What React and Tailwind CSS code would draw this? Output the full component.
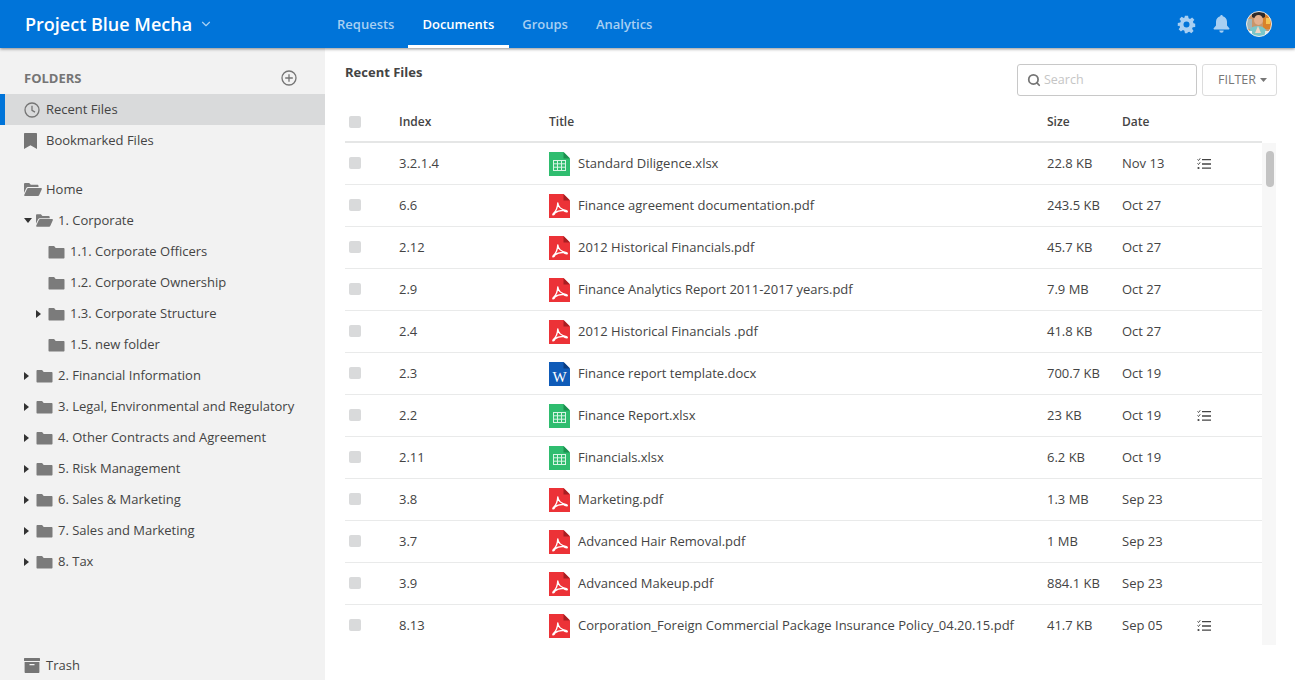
import { Search, ChevronDown } from 'lucide-react'

const font = "font-['Open_Sans',sans-serif]"

const folders = [
  { label: '1. Corporate', level: 0, arrow: 'down', open: true },
  { label: '1.1. Corporate Officers', level: 1 },
  { label: '1.2. Corporate Ownership', level: 1 },
  { label: '1.3. Corporate Structure', level: 1, arrow: 'right' },
  { label: '1.5. new folder', level: 1 },
  { label: '2. Financial Information', level: 0, arrow: 'right' },
  { label: '3. Legal, Environmental and Regulatory', level: 0, arrow: 'right' },
  { label: '4. Other Contracts and Agreement', level: 0, arrow: 'right' },
  { label: '5. Risk Management', level: 0, arrow: 'right' },
  { label: '6. Sales & Marketing', level: 0, arrow: 'right' },
  { label: '7. Sales and Marketing', level: 0, arrow: 'right' },
  { label: '8. Tax', level: 0, arrow: 'right' },
]

const files = [
  { index: '3.2.1.4', type: 'xlsx', title: 'Standard Diligence.xlsx', size: '22.8 KB', date: 'Nov 13', list: true },
  { index: '6.6', type: 'pdf', title: 'Finance agreement documentation.pdf', size: '243.5 KB', date: 'Oct 27' },
  { index: '2.12', type: 'pdf', title: '2012 Historical Financials.pdf', size: '45.7 KB', date: 'Oct 27' },
  { index: '2.9', type: 'pdf', title: 'Finance Analytics Report 2011-2017 years.pdf', size: '7.9 MB', date: 'Oct 27' },
  { index: '2.4', type: 'pdf', title: '2012 Historical Financials .pdf', size: '41.8 KB', date: 'Oct 27' },
  { index: '2.3', type: 'docx', title: 'Finance report template.docx', size: '700.7 KB', date: 'Oct 19' },
  { index: '2.2', type: 'xlsx', title: 'Finance Report.xlsx', size: '23 KB', date: 'Oct 19', list: true },
  { index: '2.11', type: 'xlsx', title: 'Financials.xlsx', size: '6.2 KB', date: 'Oct 19' },
  { index: '3.8', type: 'pdf', title: 'Marketing.pdf', size: '1.3 MB', date: 'Sep 23' },
  { index: '3.7', type: 'pdf', title: 'Advanced Hair Removal.pdf', size: '1 MB', date: 'Sep 23' },
  { index: '3.9', type: 'pdf', title: 'Advanced Makeup.pdf', size: '884.1 KB', date: 'Sep 23' },
  { index: '8.13', type: 'pdf', title: 'Corporation_Foreign Commercial Package Insurance Policy_04.20.15.pdf', size: '41.7 KB', date: 'Sep 05', list: true },
]

const FolderClosed = () => (
  <svg width="17" height="14" viewBox="0 0 17 14" className="shrink-0">
    <path d="M1.500 1h4.600l1.600 2h7.800c.6 0 1 .4 1 1v8.500c0 .6-.4 1-1 1h-14c-.6 0-1-.4-1-1V2c0-.6.4-1 1-1z" fill="#7b7b7b" />
  </svg>
)

const FolderOpen = ({ w = 18 }) => (
  <svg width={w} height="13" viewBox="0 0 18 13" className="shrink-0">
    <path d="M0 1.200C0 .5.500 0 1.200 0h4l1.600 1.800h6.500c.7 0 1.200.5 1.200 1.200v1H4.200c-.9 0-1.600.5-2 1.300L0 10z" fill="#7b7b7b" />
    <path d="M4.400 5h12.700c.6 0 1 .6.700 1.200l-2.600 5.800c-.2.600-.7 1-1.300 1H.9c-.6 0-.9-.5-.7-1l2.800-6c.3-.6.800-1 1.400-1z" fill="#7b7b7b" />
  </svg>
)

const Caret = ({ dir }) =>
  dir === 'down' ? (
    <svg width="8" height="5" viewBox="0 0 8 5" className="shrink-0"><path d="M0 0h8L4 5z" fill="#333" /></svg>
  ) : (
    <svg width="5" height="8" viewBox="0 0 5 8" className="shrink-0"><path d="M0 0l5 4-5 4z" fill="#333" /></svg>
  )

const FileIcon = ({ type }) => {
  const colors = {
    xlsx: ['#2fbd6f', '#1c8f4f'],
    pdf: ['#ec3237', '#a81e22'],
    docx: ['#0f5bb8', '#0a3c80'],
  }
  const [main, fold] = colors[type]
  return (
    <svg width="21" height="24" viewBox="0 0 21 24" className="shrink-0">
      <path d="M0 0h14.500L21 6.500V24H0z" fill={main} />
      <path d="M14.500 0L21 6.500h-6.500z" fill={fold} />
      {type === 'xlsx' && (
        <g fill="none" stroke="#d8f5e4" strokeWidth="1">
          <rect x="4.500" y="8.500" width="12" height="10" />
          <path d="M8.500 8.500v10M12.500 8.500v10M4.500 11.800h12M4.500 15.200h12" />
        </g>
      )}
      {type === 'pdf' && (
        <path
          d="M8.800 9c.2 3.500 3 6.400 8.700 7.600-4-.5-9 .2-13 3 2.500-2.500 4.100-6.400 4.300-10.600zM4.500 19.600c-.7.600-.8 1.300-.3 1.300.6 0 1.500-1 2.200-2.400M17.500 16.600c1 .2 1 1.200.2 1.200-.9 0-2.500-.7-4-2"
          fill="none"
          stroke="#fff"
          strokeWidth="1.400"
          strokeLinejoin="round"
        />
      )}
      {type === 'docx' && (
        <text x="10.500" y="20" textAnchor="middle" fontSize="15" fontFamily="'Liberation Serif', serif" fill="#fff">W</text>
      )}
    </svg>
  )
}

const ChecklistIcon = () => (
  <svg width="14" height="12" viewBox="0 0 14 12" className="shrink-0">
    <path d="M.5 1.500l1 1L3.200.3M.5 5.500l1 1 1.700-2.200" fill="none" stroke="#444" strokeWidth="1" />
    <circle cx="1.500" cy="10" r="1.100" fill="#444" />
    <path d="M5 1.700h9M5 6h9M5 10.200h9" stroke="#444" strokeWidth="1.300" />
  </svg>
)

const Avatar = () => (
  <svg width="26" height="26" viewBox="0 0 26 26" className="shrink-0">
    <defs>
      <clipPath id="avatar-clip"><circle cx="13" cy="13" r="12.500" /></clipPath>
    </defs>
    <g clipPath="url(#avatar-clip)">
      <rect width="26" height="26" fill="#c9956a" />
      <rect x="17" y="4" width="9" height="14" fill="#d9822b" />
      <rect x="20" y="7" width="4" height="6" fill="#f6c453" />
      <rect x="0" y="8" width="6" height="10" fill="#9fb7bb" />
      <path d="M6 1h13v5l-2 1H8L6 6z" fill="#2d2a2b" />
      <ellipse cx="12.500" cy="9" rx="4.500" ry="5" fill="#e3b08f" />
      <path d="M2 26c0-8 4-11 10-11s10 4 10 11z" fill="#7cc7c9" />
      <path d="M9 22l3-7 3 7z" fill="#f0d7c4" />
      <rect x="0" y="20" width="6" height="6" fill="#f4f4f4" />
      <rect x="19" y="20" width="7" height="6" fill="#e5e5e5" />
    </g>
    <circle cx="13" cy="13" r="12.500" fill="none" stroke="#fff" strokeOpacity="0.8" strokeWidth="1" />
  </svg>
)

const Checkbox = () => <div className="w-[12px] h-[12px] rounded-[2px] bg-[#d9dadb]" />

const Header = () => (
  <header className="h-12 shrink-0 bg-[#0074d9] flex items-center relative z-10 shadow-[0_1px_3px_rgba(0,0,0,0.45)]">
    <div className="w-[323px] shrink-0 pl-[25px] flex items-center">
      <span className="text-[18px] font-semibold text-white leading-none">Project Blue Mecha</span>
      <ChevronDown size={14} strokeWidth={2} className="ml-[7px] text-[#a8d0f2]" />
    </div>
    <nav className="flex h-full text-[13px] font-semibold">
      <a className="pl-[14px] pr-[14px] pt-[2px] flex items-center text-[#a8cff2]">Requests</a>
      <a className="pl-[14px] pr-[15px] flex items-center text-white border-b-[3px] border-white pt-[5px]">Documents</a>
      <a className="pl-[13px] pr-[14px] pt-[2px] flex items-center text-[#a8cff2]">Groups</a>
      <a className="px-[14px] pt-[2px] flex items-center text-[#a8cff2]">Analytics</a>
    </nav>
    <div className="ml-auto flex items-center pr-[23px]">
      <svg width="19" height="19" viewBox="0 0 24 24" className="mr-[17px]">
        <path
          fillRule="evenodd"
          fill="#a8cff2"
          d="M10 1h4l.6 3.100 1.900.8 2.600-1.800 2.800 2.800-1.800 2.600.8 1.900L23 11v4l-3.100.6-.8 1.900 1.800 2.600-2.800 2.800-2.600-1.800-1.900.8L13 23h-3l-.6-3.100-1.900-.8-2.600 1.800-2.800-2.800 1.800-2.600-.8-1.900L1 14v-4l3.100-.6.800-1.900L3.100 4.900l2.800-2.800 2.600 1.800 1-.8zM12 8.200a3.800 3.800 0 100 7.600 3.800 3.800 0 000-7.600z"
        />
      </svg>
      <svg width="17" height="18" viewBox="0 0 17 18" className="mr-[16px]">
        <path d="M8.500 0c.8 0 1.300.6 1.300 1.300C12.300 2 14 4.100 14 6.800v3.700l2.300 2.800c.4.500.1 1.200-.6 1.200H1.300c-.7 0-1-.7-.6-1.200L3 10.500V6.800C3 4.100 4.700 2 7.200 1.300 7.200.6 7.700 0 8.500 0zM6.300 15.500h4.400a2.200 2.200 0 01-4.400 0z" fill="#a8cff2" />
      </svg>
      <Avatar />
    </div>
  </header>
)

const Sidebar = () => (
  <aside className="w-[325px] shrink-0 bg-[#f2f2f2] flex flex-col text-[13px] text-[#444]">
    <div className="h-[46px] flex items-center justify-between pl-[24px] pr-[28px] pt-[15px] shrink-0">
      <span className="text-[13px] font-bold text-[#757575]">FOLDERS</span>
      <svg width="16" height="16" viewBox="0 0 16 16" className="-mt-[1px]">
        <circle cx="8" cy="8" r="7" fill="none" stroke="#757575" strokeWidth="1.300" />
        <path d="M8 4.200v7.600M4.200 8h7.600" stroke="#757575" strokeWidth="1.300" />
      </svg>
    </div>
    <div className="h-[31px] flex items-center bg-[#d9dadb] border-l-[5px] border-[#0074d9] pl-[19px] gap-[6px]">
      <svg width="16" height="16" viewBox="0 0 16 16" className="shrink-0">
        <circle cx="8" cy="8" r="7" fill="none" stroke="#757575" strokeWidth="1.300" />
        <path d="M8 3.800V8.300l3 1.800" fill="none" stroke="#757575" strokeWidth="1.300" />
      </svg>
      <span className="pt-[1px]">Recent Files</span>
    </div>
    <div className="h-[31px] flex items-center pl-[24px] gap-[9px]">
      <svg width="13" height="16" viewBox="0 0 13 16" className="shrink-0">
        <path d="M0 1c0-.6.4-1 1-1h11c.6 0 1 .4 1 1v15l-6.500-3.800L0 16z" fill="#757575" />
      </svg>
      <span className="pt-[1px]">Bookmarked Files</span>
    </div>
    <div className="h-[18px] shrink-0" />
    <div className="h-[31px] flex items-center pl-[24px] gap-[4px]">
      <FolderOpen />
      <span>Home</span>
    </div>
    {folders.map((f) => (
      <div key={f.label} className={`h-[31px] flex items-center ${f.level === 1 ? 'pl-[36px]' : 'pl-[24px]'}`}>
        <span className="w-[12px] shrink-0 flex items-center">{f.arrow && <Caret dir={f.arrow} />}</span>
        {f.open ? <FolderOpen w={17} /> : <FolderClosed />}
        <span className="ml-[5px]">{f.label}</span>
      </div>
    ))}
    <div className="mt-auto h-[30px] flex items-center pl-[24px] gap-[6px] shrink-0">
      <svg width="16" height="15" viewBox="0 0 16 15" className="shrink-0">
        <rect width="16" height="3" rx="0.500" fill="#757575" />
        <path d="M.6 4h14.800v10c0 .6-.4 1-1 1H1.600c-.6 0-1-.4-1-1zM5.500 6v1.300h5V6z" fill="#757575" fillRule="evenodd" />
      </svg>
      <span className="pt-[2px]">Trash</span>
    </div>
  </aside>
)

const rowGrid = 'grid grid-cols-[50px_150px_498px_75px_75px_1fr] items-center'

const FileTable = () => (
  <div className="flex pr-[19px]">
    <div className="flex-1 min-w-0 h-[502px] overflow-hidden">
      {files.map((file) => (
        <div key={file.index} className={`${rowGrid} h-[42px] border-b border-[#e9eaea] pl-[4px] text-[#444]`}>
          <div className="-mt-[2px]"><Checkbox /></div>
          <span className="pt-[1px]">{file.index}</span>
          <div className="flex items-center gap-[8px] whitespace-nowrap">
            <FileIcon type={file.type} />
            <span className="pt-[1px]">{file.title}</span>
          </div>
          <span className="pt-[1px]">{file.size}</span>
          <span className="pt-[1px]">{file.date}</span>
          <span>{file.list && <ChecklistIcon />}</span>
        </div>
      ))}
    </div>
    <div className="w-[14px] shrink-0 h-[502px] bg-[#f7f7f7] pl-[4px] pt-[8px]">
      <div className="w-[8px] h-[36px] rounded-[4px] bg-[#c3c3c3]" />
    </div>
  </div>
)

export default function App() {
  return (
    <div className={`${font} w-[1295px] h-[680px] flex flex-col overflow-hidden bg-white`}>
      <Header />
      <div className="flex flex-1 min-h-0">
        <Sidebar />
        <main className="flex-1 min-w-0 flex flex-col pl-[20px] text-[13px]">
          <div className="h-[47px] shrink-0 flex items-start pt-[16px] pr-[18px]">
            <span className="font-bold text-[#444] leading-[17px]">Recent Files</span>
            <div className="ml-auto w-[180px] h-[32px] border border-[#c8c8c8] rounded-[3px] flex items-center pl-[9px] gap-[3px]">
              <Search size={14} strokeWidth={3} className="text-[#757575]" />
              <span className="text-[#c5c5c5] text-[12.500px]">Search</span>
            </div>
            <div className="ml-[5px] w-[75px] h-[32px] border border-[#dcdcdc] rounded-[3px] flex items-center pl-[15px] gap-[4px] text-[12.500px] text-[#777]">
              FILTER
              <svg width="7" height="4" viewBox="0 0 7 4"><path d="M0 0h7L3.500 4z" fill="#777" /></svg>
            </div>
          </div>
          <div className="pr-[33px] shrink-0">
            <div className={`${rowGrid} h-[48px] border-b-2 border-[#e5e6e6] pl-[4px] pt-[8px] text-[12px] font-semibold text-[#444]`}>
              <Checkbox />
              <span>Index</span>
              <span>Title</span>
              <span>Size</span>
              <span>Date</span>
              <span />
            </div>
          </div>
          <FileTable />
        </main>
      </div>
    </div>
  )
}
